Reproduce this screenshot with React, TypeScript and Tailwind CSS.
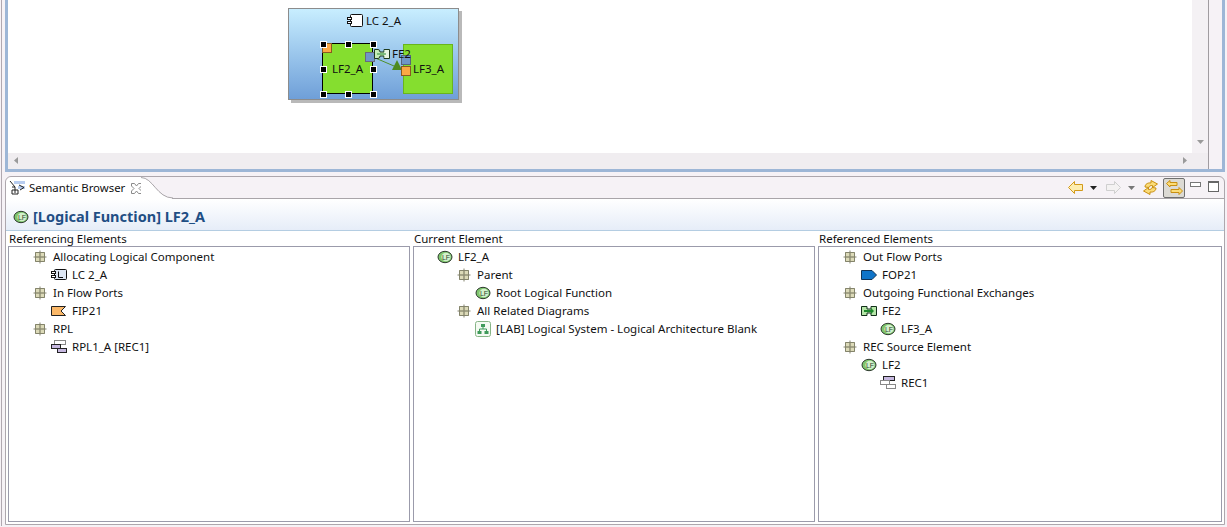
import React from "react";

const Cat = () => (
  <svg width="14" height="14" viewBox="0 0 14 14" className="shrink-0">
    <rect x="2" y="2" width="10" height="10" fill="#c4c2a0" />
    <rect x="3" y="3" width="3" height="3" fill="#dcdab8" />
    <rect x="8" y="3" width="3" height="3" fill="#dcdab8" />
    <rect x="3" y="8" width="3" height="3" fill="#dcdab8" />
    <rect x="8" y="8" width="3" height="3" fill="#dcdab8" />
    <path d="M7 0.5V13.5M0.5 7H13.5M2.5 2.5H11.5V11.5H2.5Z" stroke="#84846c" strokeWidth="1" fill="none" />
  </svg>
);

const LF = () => (
  <svg width="16" height="14" viewBox="0 0 16 14" className="shrink-0">
    <ellipse cx="8" cy="7" rx="7" ry="5.7" fill="#7fc66e" stroke="#2e3a2e" />
    <ellipse cx="9" cy="7" rx="4.6" ry="4.3" fill="#d4f0cc" />
    <text x="9" y="9.5" textAnchor="middle" fontSize="7" fontWeight="400" fontFamily="Liberation Sans, sans-serif" fill="#2c4a2c">LF</text>
  </svg>
);

const LC = () => (
  <svg width="16" height="12" viewBox="0 0 16 12" className="shrink-0">
    <rect x="3.5" y="0.5" width="12" height="10" rx="1" fill="#dde6f4" stroke="#111" />
    <rect x="0.5" y="2.5" width="4" height="2" fill="#fff" stroke="#111" />
    <rect x="0.5" y="6.5" width="4" height="2" fill="#fff" stroke="#111" />
    <path d="M7.5 2.5V8.5H12" stroke="#111" fill="none" />
  </svg>
);

const FIP = () => (
  <svg width="16" height="10" viewBox="0 0 16 10" className="shrink-0">
    <path d="M0.5 0.5H14.5L10 5L14.5 9.5H0.5Z" fill="#fbb868" stroke="#222" />
  </svg>
);

const FOP = () => (
  <svg width="16" height="10" viewBox="0 0 16 10" className="shrink-0">
    <path d="M0.5 0.5H11L15.5 5L11 9.5H0.5Z" fill="#0f74c8" stroke="#113355" />
  </svg>
);

const FE = () => (
  <svg width="16" height="10" viewBox="0 0 16 10" className="shrink-0">
    <path d="M0.5 0.5H6V3H10V0.5H15.5V9.5H10V7H6V9.5H0.5Z" fill="#b6e6a8" stroke="#12301a" />
    <path d="M3 5H12" stroke="#1d8a2d" strokeWidth="2" />
    <path d="M10 2L13 5L10 8Z" fill="#1d8a2d" />
  </svg>
);

const RPL = () => (
  <svg width="16" height="14" viewBox="0 0 16 14" className="shrink-0">
    <rect x="3.5" y="0.5" width="11" height="4" fill="#fff" stroke="#888" />
    <rect x="0.5" y="4.5" width="9" height="4" fill="#c6b8e0" stroke="#222" />
    <rect x="6.5" y="8.5" width="9" height="4" fill="#c6b8e0" stroke="#222" />
  </svg>
);

const REC = () => (
  <svg width="16" height="14" viewBox="0 0 16 14" className="shrink-0">
    <rect x="3.5" y="0.5" width="11" height="4" fill="#c6b8e0" stroke="#222" />
    <rect x="0.5" y="4.5" width="9" height="4" fill="#fff" stroke="#888" />
    <rect x="6.5" y="8.5" width="9" height="4" fill="#fff" stroke="#888" />
  </svg>
);

const Diagram = () => (
  <svg width="16" height="16" viewBox="0 0 16 16" className="shrink-0">
    <rect x="0.5" y="0.5" width="15" height="15" rx="2" fill="#f4faf2" stroke="#86b486" />
    <rect x="6" y="3" width="4" height="3" fill="#3f9a5a" />
    <rect x="2.5" y="10" width="4" height="3" fill="#3f9a5a" />
    <rect x="9.5" y="10" width="4" height="3" fill="#3f9a5a" />
    <path d="M8 6V8M4.5 10V8H11.5V10" stroke="#3f9a5a" fill="none" />
  </svg>
);

const levelClass = ["pl-[23px]", "pl-[42px]", "pl-[61px]"];

type Row = { level: number; icon: React.ReactNode; text: string };

const TreeRow = ({ level, icon, text }: Row) => (
  <div className={`flex h-[18px] items-center gap-[5px] ${levelClass[level]}`}>
    <span className="flex w-4 shrink-0 items-center justify-center">{icon}</span>
    <span className="whitespace-nowrap">{text}</span>
  </div>
);

const Column = ({ title, rows, width }: { title: string; rows: Row[]; width: string }) => (
  <div className={`flex flex-col ${width}`}>
    <div className="h-[14px] pl-px leading-[14px] whitespace-nowrap">{title}</div>
    <div className="h-[276px] border border-[#9b9bab] bg-white pt-[1px]">
      {rows.map((r) => (
        <TreeRow key={r.text} {...r} />
      ))}
    </div>
  </div>
);

const left: Row[] = [
  { level: 0, icon: <Cat />, text: "Allocating Logical Component" },
  { level: 1, icon: <LC />, text: "LC 2_A" },
  { level: 0, icon: <Cat />, text: "In Flow Ports" },
  { level: 1, icon: <FIP />, text: "FIP21" },
  { level: 0, icon: <Cat />, text: "RPL" },
  { level: 1, icon: <RPL />, text: "RPL1_A [REC1]" },
];
const mid: Row[] = [
  { level: 0, icon: <LF />, text: "LF2_A" },
  { level: 1, icon: <Cat />, text: "Parent" },
  { level: 2, icon: <LF />, text: "Root Logical Function" },
  { level: 1, icon: <Cat />, text: "All Related Diagrams" },
  { level: 2, icon: <Diagram />, text: "[LAB] Logical System - Logical Architecture Blank" },
];
const right: Row[] = [
  { level: 0, icon: <Cat />, text: "Out Flow Ports" },
  { level: 1, icon: <FOP />, text: "FOP21" },
  { level: 0, icon: <Cat />, text: "Outgoing Functional Exchanges" },
  { level: 1, icon: <FE />, text: "FE2" },
  { level: 2, icon: <LF />, text: "LF3_A" },
  { level: 0, icon: <Cat />, text: "REC Source Element" },
  { level: 1, icon: <LF />, text: "LF2" },
  { level: 2, icon: <REC />, text: "REC1" },
];

const Handle = ({ c }: { c: string }) => (
  <div className={`absolute h-[7px] w-[7px] border border-white bg-black ${c}`} />
);

const Port = ({ c }: { c: string }) => (
  <div className={`absolute h-[10px] w-[10px] border ${c}`} />
);

const DiagramNode = () => (
  <div className="absolute left-[280px] top-[8px] h-[92px] w-[171px] border border-[#8c8c8c] bg-gradient-to-b from-[#c8eeff] to-[#6f9fd8] shadow-[3px_3px_0_#b9b9b9]">
    <div className="flex h-[24px] items-center justify-center gap-[3px] pl-[1px]">
      <svg width="16" height="14" viewBox="0 0 16 14">
        <rect x="3.5" y="0.5" width="12" height="12" rx="1" fill="#fff" stroke="#111" />
        <rect x="0.5" y="3.5" width="4" height="2" fill="#fff" stroke="#111" />
        <rect x="0.5" y="7.5" width="4" height="2" fill="#fff" stroke="#111" />
      </svg>
      <span>LC 2_A</span>
    </div>
    {/* LF2_A */}
    <div className="absolute left-[33px] top-[34px] flex h-[51px] w-[51px] items-center justify-center border border-black bg-[#85de2f]">
      LF2_A
    </div>
    {/* LF3_A */}
    <div className="absolute left-[114px] top-[35px] flex h-[50px] w-[50px] items-center border border-[#69b51c] bg-[#85de2f] pl-[9px]">
      LF3_A
    </div>
    <svg width="60" height="30" viewBox="0 0 60 30" className="absolute left-[84px] top-[42px]">
      <path d="M0 6L28 18" stroke="#4f8f2a" strokeWidth="1" />
      <path d="M19 19L24 9L29 19Z" fill="#4e8a20" />
    </svg>
    <Port c="left-[33px] top-[34px] border-[#8a5a20] bg-[#fba844]" />
    <Port c="left-[76px] top-[43px] border-[#6a6a7a] bg-[#6f96c8]" />
    <Port c="left-[112px] top-[46px] border-[#55657a] bg-[#6f96c8]" />
    <Port c="left-[112px] top-[57px] border-[#8a5a20] bg-[#fba844]" />
    <svg width="16" height="10" viewBox="0 0 16 10" className="absolute left-[85px] top-[40px]">
      <path d="M0.5 0.5H4Q6 0.5 6 3H10V0.5H15.5V9.5H10V7H6Q6 9.5 4 9.5H0.5Z" fill="#c5edb8" stroke="#1d3a1d" />
      <path d="M10.5 1H15V9H10.5Z" fill="#e8f6e4" />
      <path d="M3 5H12" stroke="#2a8a3a" />
    </svg>
    <span className="absolute left-[103px] top-[38px] leading-[14px]">FE2</span>
    <Handle c="left-[31px] top-[32px]" />
    <Handle c="left-[56px] top-[32px]" />
    <Handle c="left-[81px] top-[32px]" />
    <Handle c="left-[31px] top-[57px]" />
    <Handle c="left-[81px] top-[57px]" />
    <Handle c="left-[31px] top-[82px]" />
    <Handle c="left-[56px] top-[82px]" />
    <Handle c="left-[81px] top-[82px]" />
  </div>
);

const Tool = ({ children, c = "" }: { children?: React.ReactNode; c?: string }) => (
  <div className={`flex items-center justify-center ${c}`}>{children}</div>
);

const Arrow = ({ dir, fill, stroke }: { dir: "l" | "r"; fill: string; stroke: string }) => (
  <svg width="15" height="13" viewBox="0 0 15 13">
    <path
      d={dir === "l" ? "M0.5 6.5L6.5 0.5V3.5H14.5V9.5H6.5V12.5Z" : "M14.5 6.5L8.5 0.5V3.5H0.5V9.5H8.5V12.5Z"}
      fill={fill}
      stroke={stroke}
    />
  </svg>
);

const Drop = ({ color }: { color: string }) => (
  <svg width="7" height="4" viewBox="0 0 7 4">
    <path d="M0 0H7L3.5 4Z" fill={color} />
  </svg>
);

export default function App() {
  return (
    <div
      className="h-[527px] w-[1227px] overflow-hidden bg-[#f6f2f6] text-[11.5px] text-[#111]"
      style={{ fontFamily: '"Noto Sans", sans-serif' }}
    >
      <div className="ml-px h-[526px] w-[1226px] border-l border-[#b0a8b0] pl-[3px] pr-[2px]">
        {/* Top pane */}
        <div className="flex h-[172px] border-x-[3px] border-b-[3px] border-[#9db6d6]">
          <div className="flex w-[1201px] border-r border-[#a09ca0] pr-0">
            <div className="flex w-[1200px] flex-col">
              <div className="flex flex-1">
                <div className="relative flex-1 bg-white">
                  <DiagramNode />
                </div>
                <div className="flex w-[16px] items-end justify-center bg-[#f4f1f4] pb-[9px]">
                  <svg width="7" height="4" viewBox="0 0 7 4">
                    <path d="M0 0H7L3.5 4Z" fill="#9a9a9a" />
                  </svg>
                </div>
              </div>
              <div className="flex h-[16px] items-center justify-between bg-[#f0edf0] pb-[1px] pl-[6px] pr-[21px]">
                <svg width="4" height="7" viewBox="0 0 4 7">
                  <path d="M4 0V7L0 3.5Z" fill="#9a9a9a" />
                </svg>
                <svg width="4" height="7" viewBox="0 0 4 7">
                  <path d="M0 0V7L4 3.5Z" fill="#9a9a9a" />
                </svg>
              </div>
            </div>
          </div>
        </div>

        {/* Bottom pane */}
        <div className="mt-[4px] flex h-[349px] flex-col rounded-t-[6px] border border-[#ada7ad]">
          {/* Tab bar */}
          <div className="flex h-[22px] shrink-0 items-stretch border-b border-[#a9a5a9]">
            <div className="relative z-10 -mb-px flex h-[22px] w-[135px] items-center rounded-tl-[6px] bg-white pl-[3px] text-[11.4px]">
              <svg width="17" height="16" viewBox="0 0 17 16" className="shrink-0">
                <rect x="5" y="1" width="11" height="3" fill="#b8cdf0" />
                <rect x="9" y="6" width="7" height="3" fill="#b8cdf0" />
                <path d="M1 1L6 7M6 7V13M6 7H3M3 14H9V10H3ZM10 5L15 7.5L11 10" stroke="#222" fill="none" />
              </svg>
              <span className="ml-[3px] whitespace-nowrap">Semantic Browser</span>
              <svg width="11" height="11" viewBox="0 0 11 11" className="ml-[6px] shrink-0">
                <path d="M0.5 0.5H3.5L5.5 3L7.5 0.5H10.5V3L8 5.5L10.5 8V10.5H7.5L5.5 8L3.5 10.5H0.5V8L3 5.5L0.5 3Z" fill="#fff" stroke="#8a8a8a" />
              </svg>
            </div>
            <svg width="32" height="22" viewBox="0 0 32 22" className="relative z-10 -mb-px shrink-0">
              <path d="M0 0C12 0 16 21 31 21V22H0Z" fill="#fff" />
              <path d="M0 0.5C12 0.5 16 21 32 21" stroke="#a9a5a9" fill="none" />
            </svg>
            <div className="flex-1" />
            <div className="flex items-center pr-[5px]">
              <Tool><Arrow dir="l" fill="#fdeeb0" stroke="#d39a1a" /></Tool>
              <Tool c="ml-[7px]"><Drop color="#222" /></Tool>
              <Tool c="ml-[9px]"><Arrow dir="r" fill="#f4f2f2" stroke="#cfcfcf" /></Tool>
              <Tool c="ml-[7px]"><Drop color="#777" /></Tool>
              <Tool c="ml-[8px]">
                <svg width="15" height="15" viewBox="0 0 15 15">
                  <path d="M2 7C2 4 5 2.5 8 3V0.5L14.5 4L9.5 7.5V5.5C7.5 5.5 6 6 6 7.5Z" fill="#fbdc78" stroke="#c98f10" />
                  <path d="M13 8C13 11 10 12.5 7 12V14.5L0.5 11L5.5 7.5V9.5C7.5 9.5 9 9 9 7.5Z" fill="#fbdc78" stroke="#c98f10" />
                </svg>
              </Tool>
              <Tool c="ml-[5px] h-[20px] w-[22px] rounded-[2px] border border-[#6f6f6f] bg-[#dcdad4]">
                <svg width="17" height="15" viewBox="0 0 17 15">
                  <path d="M0.5 3.5L4 0.5V2.5H11V5.5H4V7Z" fill="#fbdc78" stroke="#c98f10" />
                  <path d="M16.5 11L13 7.5V9.5H5V12.5H13V14.5Z" fill="#fbdc78" stroke="#c98f10" />
                </svg>
              </Tool>
              <Tool c="ml-[5px] mb-[7px] h-[5px] w-[11px] border border-[#777] bg-white" />
              <Tool c="ml-[7px] mb-[3px] h-[11px] w-[11px] border border-[#666] border-t-[2px] bg-white" />
            </div>
          </div>

          {/* Content */}
          <div className="flex flex-1 flex-col bg-white">
            <div className="flex h-[32px] shrink-0 items-center gap-[4px] border-b border-[#b4cde2] bg-gradient-to-b from-white to-[#e6edf8] pl-[7px] pt-[5px]">
              <LF />
              <span className="whitespace-nowrap text-[14.5px] font-bold text-[#1f4e84]">[Logical Function] LF2_A</span>
            </div>
            <div className="flex gap-[3px] pl-[2px] pr-px pt-px">
              <Column title="Referencing Elements" rows={left} width="w-[402px]" />
              <Column title="Current Element" rows={mid} width="w-[402px]" />
              <Column title="Referenced Elements" rows={right} width="w-[404px]" />
            </div>
          </div>
        </div>
      </div>
    </div>
  );
}
